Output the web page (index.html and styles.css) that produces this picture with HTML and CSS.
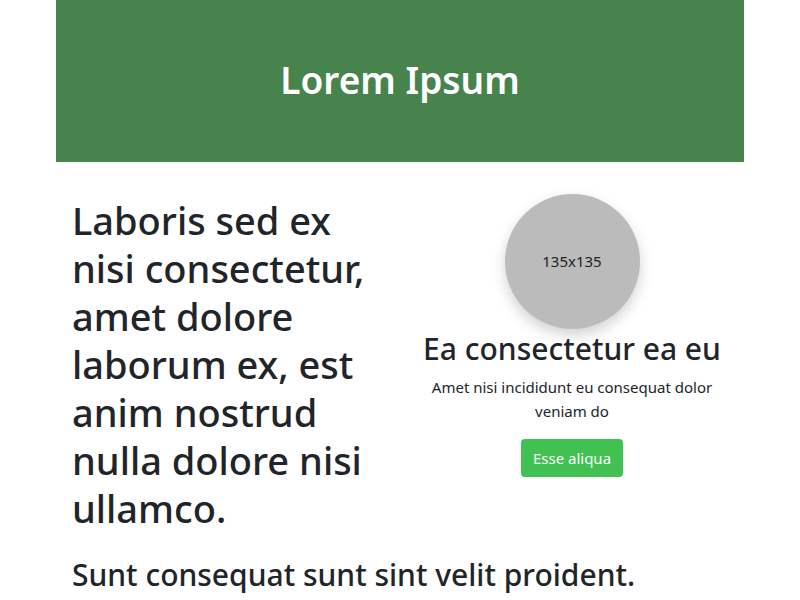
FILE: index.html
```html
<!DOCTYPE html>
<html lang="en">
<head>
<meta charset="utf-8">
<title>Lorem Ipsum</title>
<link rel="stylesheet" href="styles.css">
</head>
<body>
<div class="container">
  <header class="hero">
    <h1 class="hero-title">Lorem Ipsum</h1>
  </header>
  <div class="row">
    <div class="col">
      <h1 class="lead-title">Laboris sed ex nisi consectetur, amet dolore laborum ex, est anim nostrud nulla dolore nisi ullamco.</h1>
    </div>
    <div class="col col-center">
      <div class="avatar">135x135</div>
      <h3 class="card-title">Ea consectetur ea eu</h3>
      <p class="card-text">Amet nisi incididunt eu consequat dolor veniam do</p>
      <a class="btn" href="#">Esse aliqua</a>
    </div>
  </div>
  <div class="footer-row">
    <h2 class="sub-title">Sunt consequat sunt sint velit proident.</h2>
  </div>
</div>
</body>
</html>
```
FILE: styles.css
```css
* { box-sizing: border-box; }
html, body { margin: 0; padding: 0; }
body {
  font-family: "Noto Sans", "Open Sans", sans-serif;
  color: #212529;
  background: #fff;
  font-size: 16px;
  line-height: 1.5;
}
.container {
  width: 720px;
  margin: 0 auto;
  padding: 0 16px;
}
.hero {
  background: #46834d;
  height: 162px;
  display: flex;
  align-items: center;
  justify-content: center;
}
.hero-title {
  margin: 0 0 2px;
  color: #fff;
  font-size: 37px;
  font-weight: 600;
  line-height: 1.2;
}
.row {
  display: flex;
  margin-top: 32px;
}
.col {
  flex: 1 1 50%;
  padding: 0 16px;
}
.col-center {
  display: flex;
  flex-direction: column;
  align-items: center;
  text-align: center;
}
.lead-title {
  margin: 2px 0 8px;
  font-size: 38px;
  font-weight: 500;
  line-height: 48px;
}
.avatar {
  width: 135px;
  height: 135px;
  border-radius: 50%;
  background: #bbbbbb;
  box-shadow: 0 6px 14px rgba(0,0,0,0.18);
  display: flex;
  align-items: center;
  justify-content: center;
  font-size: 15px;
  color: #222;
}
.card-title {
  margin: 2px 0 8px;
  font-size: 30px;
  font-weight: 500;
  line-height: 36px;
}
.card-text {
  margin: 0 0 16px;
  font-size: 15px;
  line-height: 24px;
  max-width: 300px;
}
.btn {
  display: inline-block;
  background: #41c152;
  color: #fff;
  text-decoration: none;
  font-size: 15px;
  line-height: 24px;
  padding: 7px 12px;
  border-radius: 4px;
}
.footer-row {
  padding: 17px 16px 0;
}
.sub-title {
  margin: 0;
  font-size: 30px;
  font-weight: 500;
  line-height: 36px;
}
```
